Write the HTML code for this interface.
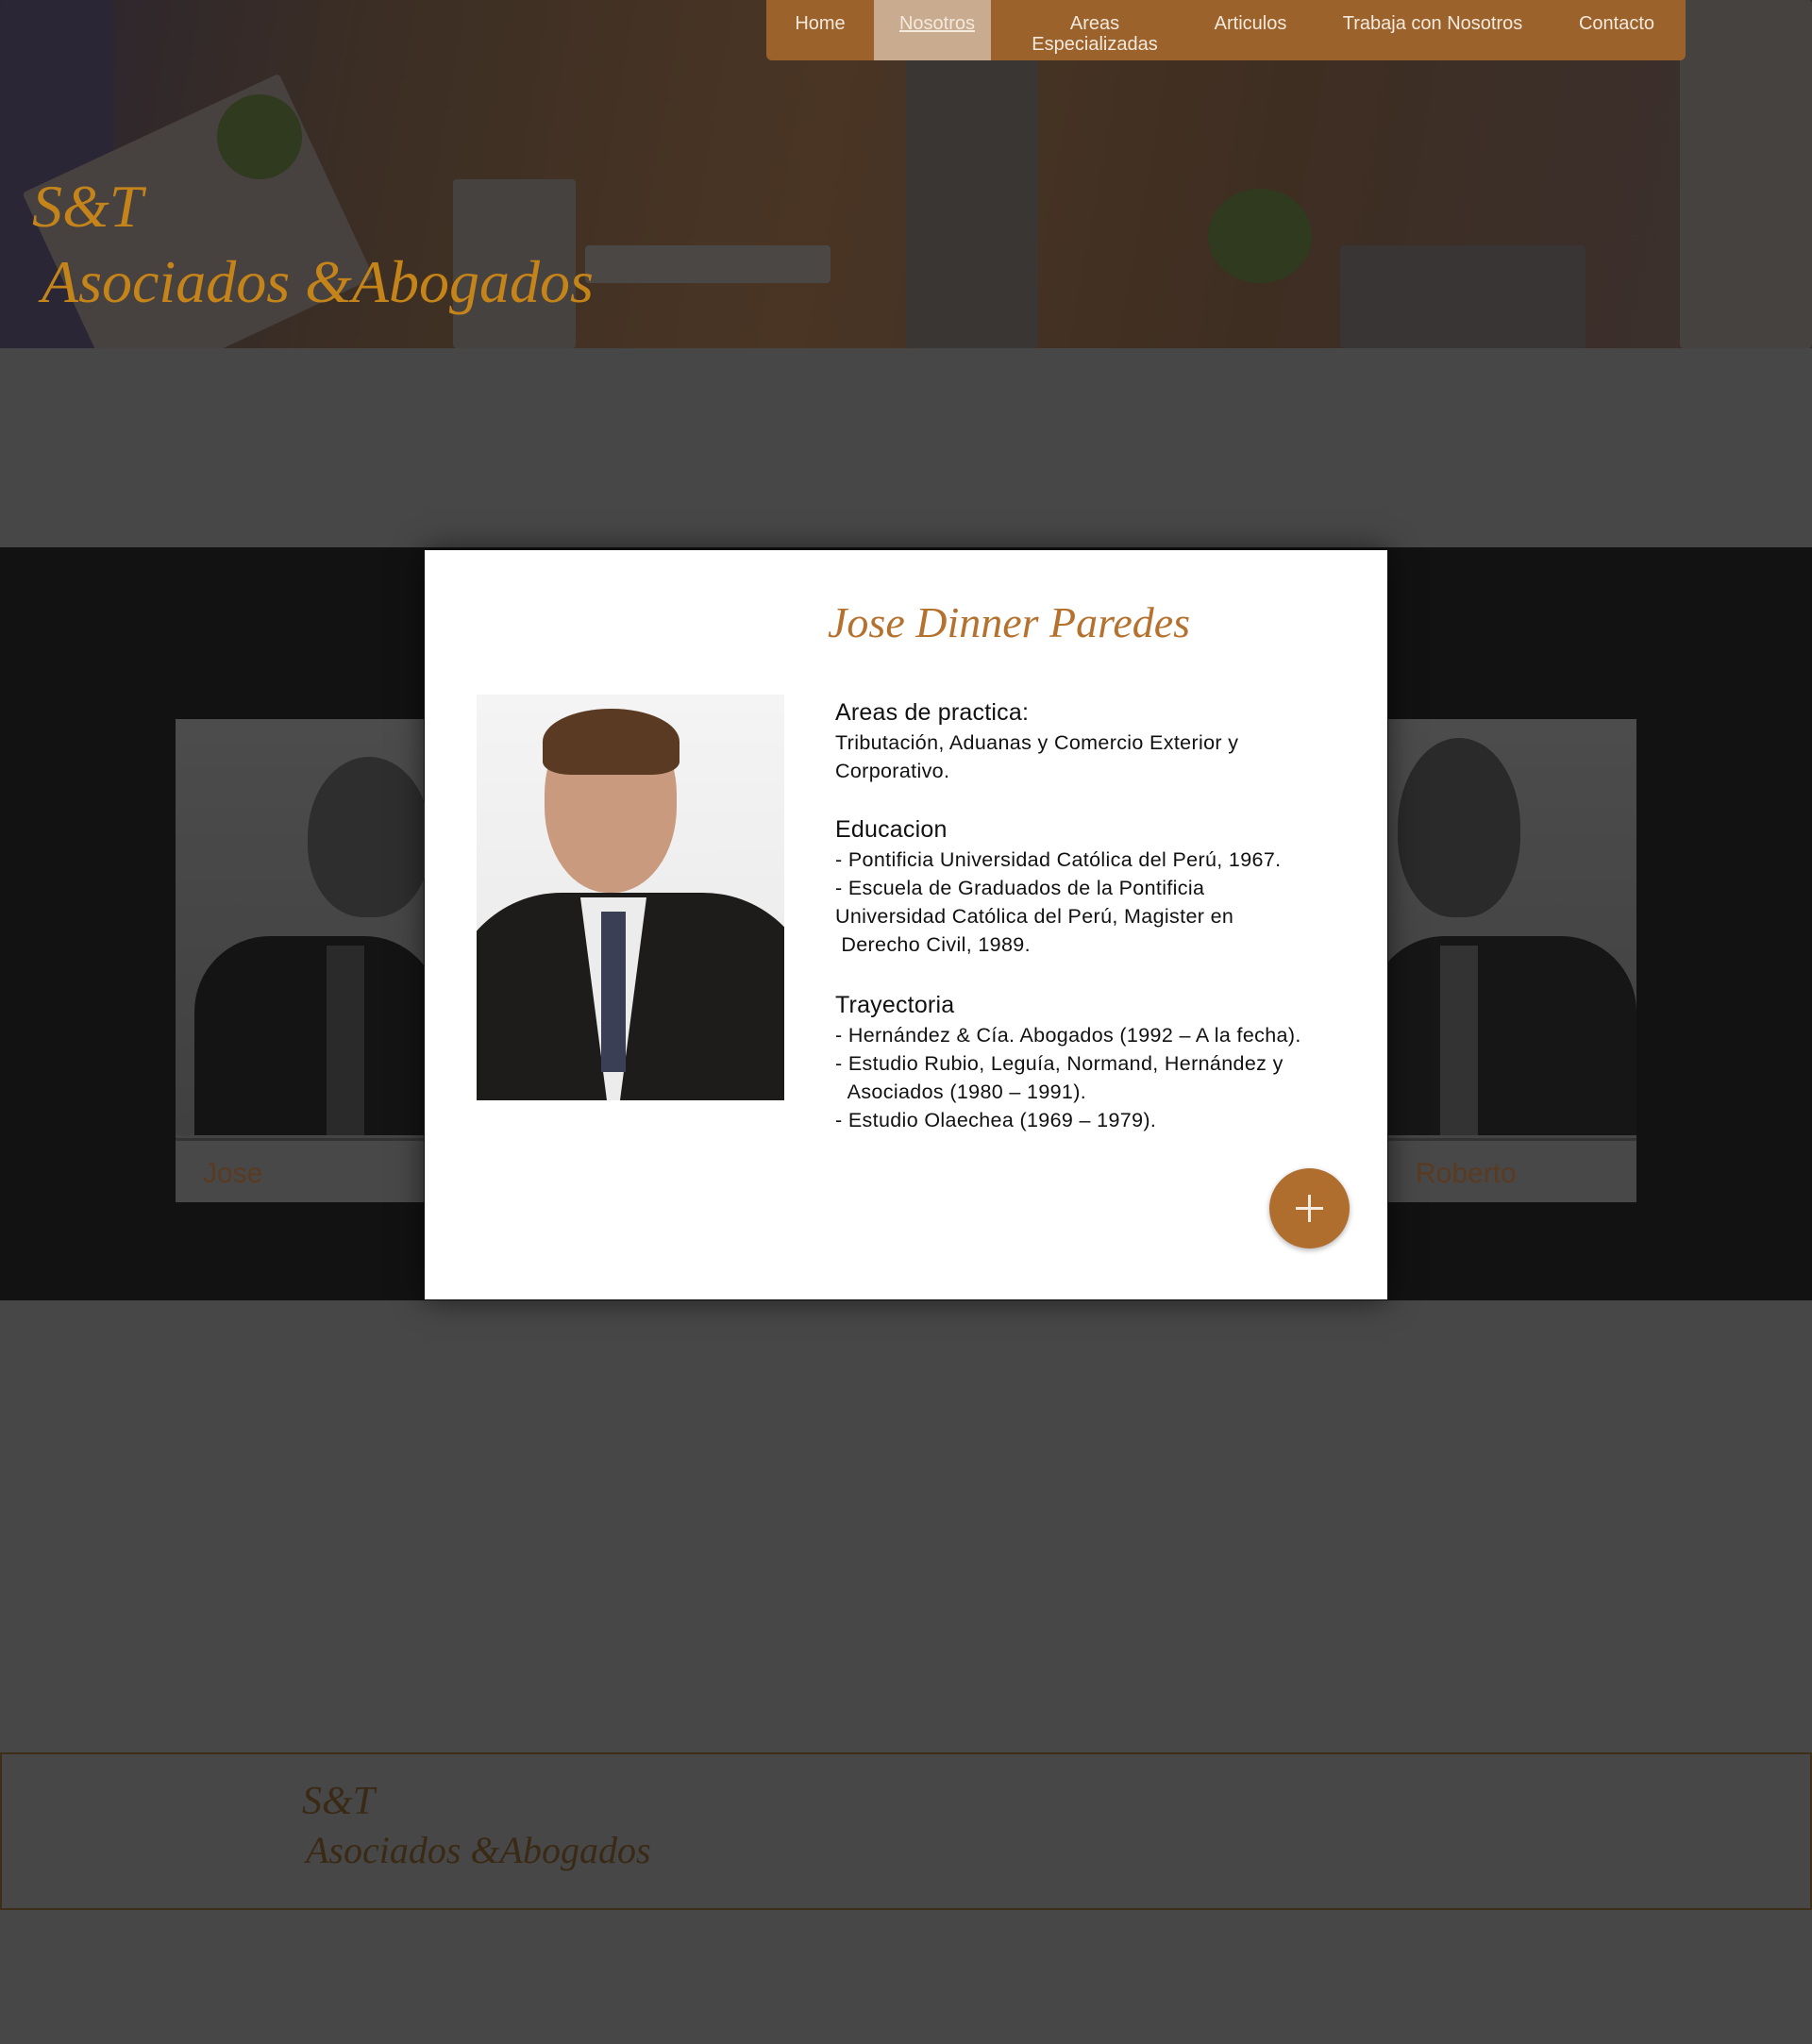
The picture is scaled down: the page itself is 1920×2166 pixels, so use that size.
<!DOCTYPE html>
<html><head><meta charset="utf-8">
<style>
*{margin:0;padding:0;box-sizing:border-box}
body{width:1920px;height:2166px;background:#474747;position:relative;overflow:hidden;font-family:"Liberation Sans",sans-serif}
.abs{position:absolute}
.script{font-family:"Liberation Serif",serif;font-style:italic}
#hdr{left:0;top:0;width:1920px;height:369px;background:linear-gradient(100deg,#2a2430 0%,#3b2e24 20%,#4a3524 45%,#3e2e22 70%,#3a3030 100%);overflow:hidden}
.blob{position:absolute;border-radius:4px}
#nav{left:812px;top:0;width:974px;height:64px;background:#9c622b;border-radius:0 0 6px 6px}
.ni{position:absolute;top:14px;color:#f3e9dd;font-size:20px;text-align:center;line-height:22px;transform:translateX(-50%);white-space:nowrap}
#band{left:0;top:580px;width:1920px;height:798px;background:#121212}
.card{top:762px;width:263px;height:512px;background:#444}
.cardname{position:absolute;left:0;bottom:0;width:100%;height:68px;background:#484848;border-top:3px solid #333;color:#5a3a20;font-size:30px;padding:18px 0 0 29px}
#modal{left:450px;top:583px;width:1020px;height:794px;background:#fff;box-shadow:0 0 30px rgba(0,0,0,.6)}
.t{color:#111;font-size:21.5px;line-height:30px;letter-spacing:0.35px;font-family:"Liberation Sans",sans-serif}
.h{font-size:25px;line-height:34px;letter-spacing:0.2px}
#plus{left:1345px;top:1238px;width:85px;height:85px;border-radius:50%;background:#b06e2e;box-shadow:0 2px 6px rgba(0,0,0,.3)}
#footer{left:0;top:1857px;width:1920px;height:167px;border:2px solid #3d2e1a}
</style></head><body>
<div id="hdr" class="abs">
  <div class="blob" style="left:0;top:0;width:120px;height:369px;background:#2a2636"></div>
  <div class="blob" style="left:60px;top:130px;width:300px;height:239px;background:#47423f;transform:rotate(-25deg)"></div>
  <div class="blob" style="left:230px;top:100px;width:90px;height:90px;background:#2f3a1e;border-radius:50%"></div>
  <div class="blob" style="left:480px;top:190px;width:130px;height:179px;background:#46423f"></div>
  <div class="blob" style="left:620px;top:260px;width:260px;height:40px;background:#4a4745"></div>
  <div class="blob" style="left:960px;top:60px;width:140px;height:309px;background:#3a3634"></div>
  <div class="blob" style="left:1280px;top:200px;width:110px;height:100px;background:#2f3a1e;border-radius:50%"></div>
  <div class="blob" style="left:1420px;top:260px;width:260px;height:109px;background:#383534"></div>
  <div class="blob" style="left:1780px;top:0;width:140px;height:369px;background:#46423f"></div>
  <div class="abs script" style="left:34px;top:182px;font-size:64px;color:#c5841a">S&amp;T</div>
  <div class="abs script" style="left:44px;top:262px;font-size:64px;color:#c5841a">Asociados &amp;Abogados</div>
</div>
<div id="nav" class="abs">
  <div class="abs" style="left:114px;top:0;width:124px;height:64px;background:#c9ab8f"></div>
  <div class="ni" style="left:57px">Home</div>
  <div class="ni" style="left:181px;text-decoration:underline">Nosotros</div>
  <div class="ni" style="left:348px">Areas<br>Especializadas</div>
  <div class="ni" style="left:513px">Articulos</div>
  <div class="ni" style="left:706px">Trabaja con Nosotros</div>
  <div class="ni" style="left:901px">Contacto</div>
</div>
<div id="band" class="abs"></div>
<div class="abs card" style="left:186px">
  <div class="abs" style="left:0;top:0;width:263px;height:441px;background:linear-gradient(#4c4c4c,#404040)"></div>
  <div class="abs" style="left:140px;top:40px;width:130px;height:170px;border-radius:50% 50% 45% 45%;background:#2e2e2e"></div>
  <div class="abs" style="left:20px;top:230px;width:260px;height:211px;border-radius:80px 80px 0 0;background:#141414"></div>
  <div class="abs" style="left:160px;top:240px;width:40px;height:201px;background:#2a2a2a"></div>
  <div class="cardname">Jose</div>
</div>
<div class="abs card" style="left:1471px">
  <div class="abs" style="left:0;top:0;width:263px;height:441px;background:linear-gradient(#4c4c4c,#404040)"></div>
  <div class="abs" style="left:10px;top:20px;width:130px;height:190px;border-radius:50% 50% 45% 45%;background:#2a2a2a"></div>
  <div class="abs" style="left:-20px;top:230px;width:283px;height:211px;border-radius:80px 80px 0 0;background:#161616"></div>
  <div class="abs" style="left:55px;top:240px;width:40px;height:201px;background:#333"></div>
  <div class="cardname">Roberto</div>
</div>
<div id="modal" class="abs">
  <div class="abs script" style="left:427px;top:50px;font-size:46px;color:#b5722e">Jose Dinner Paredes</div>
  <div class="abs" style="left:55px;top:153px;width:326px;height:430px;background:linear-gradient(#f4f4f4,#e8e8e8);overflow:hidden">
    <div class="abs" style="left:72px;top:20px;width:140px;height:190px;border-radius:45% 45% 48% 48%;background:#c99a7d"></div>
    <div class="abs" style="left:70px;top:15px;width:145px;height:70px;border-radius:50% 50% 20% 20%;background:#5a3a22"></div>
    <div class="abs" style="left:-30px;top:210px;width:390px;height:260px;border-radius:120px 120px 0 0;background:#1e1b1b"></div>
    <div class="abs" style="left:110px;top:215px;width:70px;height:215px;background:#ececec;clip-path:polygon(0 0,100% 0,60% 100%,40% 100%)"></div>
    <div class="abs" style="left:132px;top:230px;width:26px;height:170px;background:#3a3f55"></div>
  </div>
  <div class="abs" style="left:435px;top:155px;width:560px">
    <div class="t h">Areas de practica:</div>
    <div class="t">Tributación, Aduanas y Comercio Exterior y<br>Corporativo.</div>
    <div class="t" style="height:30px"></div>
    <div class="t h">Educacion</div>
    <div class="t">- Pontificia Universidad Católica del Perú, 1967.<br>- Escuela de Graduados de la Pontificia<br>Universidad Católica del Perú, Magister en<br>&nbsp;Derecho Civil, 1989.</div>
    <div class="t" style="height:30px"></div>
    <div class="t h" style="margin-top:2px">Trayectoria</div>
    <div class="t">- Hernández &amp; Cía. Abogados (1992 – A la fecha).<br>- Estudio Rubio, Leguía, Normand, Hernández y<br>&nbsp;&nbsp;Asociados (1980 – 1991).<br>- Estudio Olaechea (1969 – 1979).</div>
  </div>
</div>
<div id="plus" class="abs">
  <div class="abs" style="left:28px;top:41px;width:29px;height:3px;background:#f6ece0"></div>
  <div class="abs" style="left:41px;top:28px;width:3px;height:29px;background:#f6ece0"></div>
</div>
<div id="footer" class="abs">
  <div class="abs script" style="left:318px;top:26px;font-size:42px;color:#3a2a15">S&amp;T</div>
  <div class="abs script" style="left:322px;top:78px;font-size:40px;color:#3a2a15">Asociados &amp;Abogados</div>
</div>
</body></html>
